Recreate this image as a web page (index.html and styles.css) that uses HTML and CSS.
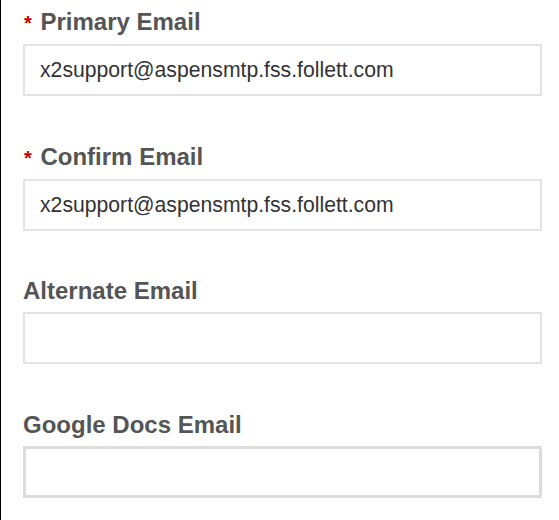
FILE: index.html
```html
<!DOCTYPE html>
<html>
<head>
<meta charset="utf-8">
<link rel="stylesheet" href="styles.css">
</head>
<body>
<div class="page">
  <div class="field">
    <label class="label"><span class="req">*</span> Primary Email</label>
    <div class="input">x2support@aspensmtp.fss.follett.com</div>
  </div>
  <div class="field">
    <label class="label"><span class="req">*</span> Confirm Email</label>
    <div class="input">x2support@aspensmtp.fss.follett.com</div>
  </div>
  <div class="field">
    <label class="label">Alternate Email</label>
    <div class="input"></div>
  </div>
  <div class="field">
    <label class="label">Google Docs Email</label>
    <div class="input focus"></div>
  </div>
</div>
</body>
</html>
```
FILE: styles.css
```css
html, body {
  margin: 0;
  padding: 0;
  background: #fff;
}
body {
  width: 559px;
  height: 520px;
  overflow: hidden;
  border-left: 1px solid #000;
  box-sizing: border-box;
  font-family: "Liberation Sans", Arial, sans-serif;
}
.page {
  display: flex;
  flex-direction: column;
  gap: 46.5px;
  padding: 8px 0 0 22px;
}
.field {
  display: flex;
  flex-direction: column;
  gap: 7px;
  width: 519px;
}
.label {
  font-weight: bold;
  font-size: 24px;
  line-height: 28px;
  color: #555;
}
.req {
  color: #c00;
  font-size: 20px;
  margin: 0 2px 0 1px;
}
.input {
  box-sizing: border-box;
  height: 52px;
  border: 2px solid #e3e3e3;
  padding: 0 15px;
  font-size: 21.2px;
  line-height: 48px;
  color: #333;
}
.focus {
  border: 3px solid #dcdcdc;
}
```
